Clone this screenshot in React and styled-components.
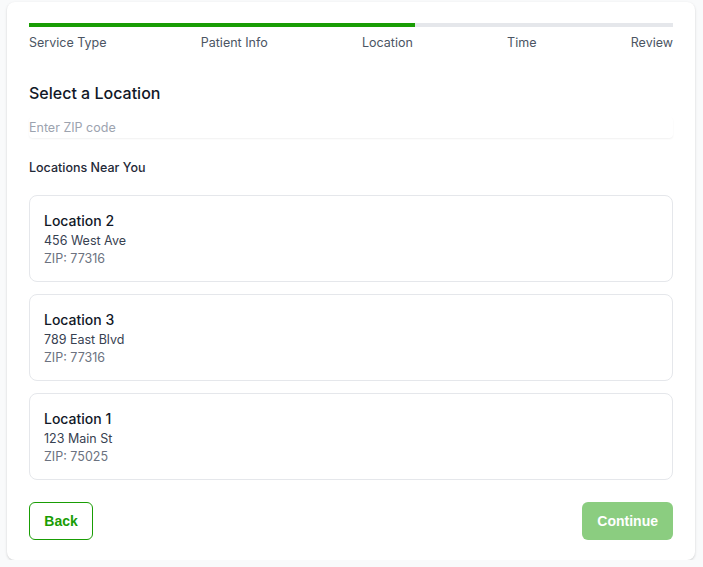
import React from 'react';
import styled, { createGlobalStyle } from 'styled-components';

const GlobalStyle = createGlobalStyle`
  html, body {
    margin: 0;
    background: #f9fafb;
  }
  body {
    font-family: Inter, "Noto Sans", sans-serif;
    color: #111827;
  }
`;

const Page = styled.div`
  padding: 2px 8px 0 7px;
`;

const Panel = styled.div`
  background: #ffffff;
  border-radius: 8px;
  box-shadow: 0 1px 3px rgba(0, 0, 0, 0.12), 0 1px 2px rgba(0, 0, 0, 0.06);
  padding: 21px 22px 20px;
  box-sizing: border-box;
`;

const Track = styled.div`
  height: 4px;
  background: #e5e7eb;
  position: relative;
  overflow: hidden;
`;

const Fill = styled.div`
  height: 100%;
  background: #199d04;
`;

const StepLabels = styled.div`
  display: flex;
  justify-content: space-between;
  margin-top: 7px;
`;

const StepLabel = styled.span`
  font-size: 12.5px;
  line-height: 18px;
  color: #4b5563;
`;

const Heading = styled.h2`
  margin: 29px 0 0;
  font-size: 16px;
  line-height: 24px;
  font-weight: 500;
  color: #111827;
`;

const ZipInput = styled.input`
  display: block;
  width: 100%;
  box-sizing: border-box;
  margin-top: 12px;
  height: 21px;
  padding: 0;
  border: none;
  border-radius: 4px;
  box-shadow: 0 1px 2px rgba(0, 0, 0, 0.06);
  font-family: inherit;
  font-size: 12.5px;
  color: #111827;
  outline: none;
  background: #fff;

  &::placeholder {
    color: #9ca3af;
  }
`;

const SubHeading = styled.h3`
  margin: 21px 0 0;
  font-size: 12.5px;
  line-height: 18px;
  font-weight: 500;
  color: #1f2937;
`;

const LocationList = styled.div`
  display: flex;
  flex-direction: column;
  gap: 12px;
  margin-top: 18px;
`;

const LocationCard = styled.div`
  border: 1px solid #e5e7eb;
  border-radius: 8px;
  padding: 15px 14px 14px;
  height: 87px;
  box-sizing: border-box;
  cursor: pointer;
`;

const LocationName = styled.div`
  font-size: 14px;
  line-height: 20px;
  font-weight: 500;
  color: #111827;
  margin-bottom: 1px;
`;

const LocationLine = styled.div`
  font-size: 12.5px;
  line-height: 18px;
  color: ${p => p.muted ? '#6b7280' : '#374151'};
`;

const Actions = styled.div`
  display: flex;
  justify-content: space-between;
  margin-top: 22px;
`;

const Button = styled.button`
  height: 38px;
  padding: 0 14px;
  min-width: ${p => p.primary ? '90px' : '64px'};
  border-radius: 6px;
  font-family: "Liberation Sans", Arial, sans-serif;
  font-size: 14px;
  font-weight: 700;
  border: 1px solid ${p => p.primary ? 'transparent' : '#199d04'};
  background: ${p => p.primary ? '#199d04' : '#fff'};
  color: ${p => p.primary ? '#fff' : '#199d04'};
  opacity: ${p => p.disabled ? 0.5 : 1};
  cursor: ${p => p.disabled ? 'not-allowed' : 'pointer'};
`;

const steps = ['Service Type', 'Patient Info', 'Location', 'Time', 'Review'];

const locations = [
  { name: 'Location 2', address: '456 West Ave', zip: '77316' },
  { name: 'Location 3', address: '789 East Blvd', zip: '77316' },
  { name: 'Location 1', address: '123 Main St', zip: '75025' },
];

export default function App() {
  const current = 3;
  const progress = (current / steps.length) * 100;

  return (
    <Page>
      <GlobalStyle />
      <Panel>
        <Track>
          <Fill style={{ width: `${progress}%` }} />
        </Track>
        <StepLabels>
          {steps.map(s => <StepLabel key={s}>{s}</StepLabel>)}
        </StepLabels>

        <Heading>Select a Location</Heading>
        <ZipInput placeholder="Enter ZIP code" />

        <SubHeading>Locations Near You</SubHeading>
        <LocationList>
          {locations.map(loc => (
            <LocationCard key={loc.name}>
              <LocationName>{loc.name}</LocationName>
              <LocationLine>{loc.address}</LocationLine>
              <LocationLine muted>ZIP: {loc.zip}</LocationLine>
            </LocationCard>
          ))}
        </LocationList>

        <Actions>
          <Button>Back</Button>
          <Button primary disabled>Continue</Button>
        </Actions>
      </Panel>
    </Page>
  );
}
